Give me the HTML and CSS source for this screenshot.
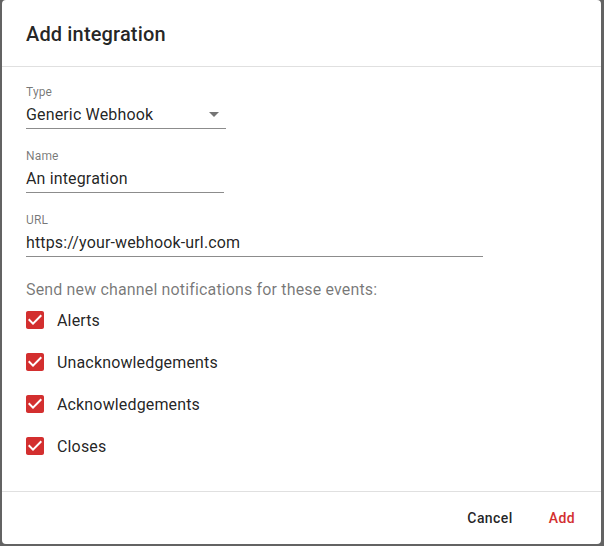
FILE: index.html
```html
<!DOCTYPE html>
<html>
<head>
<meta charset="utf-8">
<link rel="stylesheet" href="styles.css">
</head>
<body>
<div class="dialog">
  <div class="header"><h2 class="title">Add integration</h2></div>
  <div class="content">
    <div class="field w200">
      <div class="label">Type</div>
      <div class="input select">
        <span>Generic Webhook</span>
        <svg class="arrow" viewBox="0 0 24 24" width="24" height="24"><path d="M7 10l5 5 5-5z" fill="#757575"/></svg>
      </div>
    </div>
    <div class="field w198">
      <div class="label">Name</div>
      <div class="input"><span>An integration</span></div>
    </div>
    <div class="field w457">
      <div class="label">URL</div>
      <div class="input"><span>https://your-webhook-url.com</span></div>
    </div>
    <div class="legend">Send new channel notifications for these events:</div>
    <div class="checks">
      <label class="check"><svg viewBox="0 0 24 24" width="24" height="24"><path fill="#d32f2f" d="M19 3H5c-1.11 0-2 .9-2 2v14c0 1.1.89 2 2 2h14c1.11 0 2-.9 2-2V5c0-1.1-.89-2-2-2z"/><path fill="#fff" d="M10 17l-5-5 1.41-1.41L10 14.17l7.59-7.59L19 8l-9 9z"/></svg><span>Alerts</span></label>
      <label class="check"><svg viewBox="0 0 24 24" width="24" height="24"><path fill="#d32f2f" d="M19 3H5c-1.11 0-2 .9-2 2v14c0 1.1.89 2 2 2h14c1.11 0 2-.9 2-2V5c0-1.1-.89-2-2-2z"/><path fill="#fff" d="M10 17l-5-5 1.41-1.41L10 14.17l7.59-7.59L19 8l-9 9z"/></svg><span>Unacknowledgements</span></label>
      <label class="check"><svg viewBox="0 0 24 24" width="24" height="24"><path fill="#d32f2f" d="M19 3H5c-1.11 0-2 .9-2 2v14c0 1.1.89 2 2 2h14c1.11 0 2-.9 2-2V5c0-1.1-.89-2-2-2z"/><path fill="#fff" d="M10 17l-5-5 1.41-1.41L10 14.17l7.59-7.59L19 8l-9 9z"/></svg><span>Acknowledgements</span></label>
      <label class="check"><svg viewBox="0 0 24 24" width="24" height="24"><path fill="#d32f2f" d="M19 3H5c-1.11 0-2 .9-2 2v14c0 1.1.89 2 2 2h14c1.11 0 2-.9 2-2V5c0-1.1-.89-2-2-2z"/><path fill="#fff" d="M10 17l-5-5 1.41-1.41L10 14.17l7.59-7.59L19 8l-9 9z"/></svg><span>Closes</span></label>
    </div>
  </div>
  <div class="footer">
    <button class="btn">Cancel</button>
    <button class="btn primary">Add</button>
  </div>
</div>
</body>
</html>
```

FILE: styles.css
```css
html, body {
  margin: 0;
  padding: 0;
  background: #636363;
  font-family: Roboto, "Liberation Sans", sans-serif;
  color: rgba(0,0,0,0.87);
}
.dialog {
  margin-left: 2px;
  width: 599px;
  height: 544px;
  background: #fff;
  border-radius: 4px;
  display: flex;
  flex-direction: column;
  box-sizing: border-box;
}
.header {
  height: 67px;
  box-sizing: border-box;
  border-bottom: 1px solid #e0e0e0;
  padding: 20px 24px 0;
}
.title {
  margin: 0;
  font-size: 20px;
  font-weight: 500;
  line-height: 28px;
  letter-spacing: 0.0075em;
}
.content {
  flex: 1;
  padding: 18px 24px 0;
  display: flex;
  flex-direction: column;
}
.field {
  display: flex;
  flex-direction: column;
  margin-bottom: 20px;
}
.w200 { width: 200px; }
.w198 { width: 198px; }
.w457 { width: 457px; }
.label {
  font-size: 12px;
  line-height: 14px;
  color: rgba(0,0,0,0.54);
  letter-spacing: 0.15px;
}
.input {
  height: 29px;
  border-bottom: 1px solid #8c8c8c;
  display: flex;
  align-items: center;
  padding-top: 1px;
  box-sizing: border-box;
  height: 30px;
  font-size: 16px;
  line-height: 19px;
  letter-spacing: 0.15px;
  position: relative;
}
.select .arrow {
  position: absolute;
  right: 0;
  top: 3px;
}
.legend {
  margin-top: 3px;
  font-size: 16px;
  line-height: 19px;
  letter-spacing: 0.15px;
  color: rgba(0,0,0,0.54);
}
.checks {
  display: flex;
  flex-direction: column;
}
.check {
  height: 42px;
  display: flex;
  align-items: center;
  gap: 10px;
  margin-left: -3px;
  font-size: 16px;
  letter-spacing: 0.15px;
}
.check svg { display: block; }
.footer {
  height: 53px;
  box-sizing: border-box;
  border-top: 1px solid #e0e0e0;
  display: flex;
  justify-content: flex-end;
  align-items: center;
  gap: 8px;
  padding: 0 7px 0 8px;
}
.btn {
  min-width: 64px;
  height: 36px;
  padding: 6px 8px;
  border: none;
  background: transparent;
  font-family: Roboto, "Liberation Sans", sans-serif;
  font-size: 14px;
  font-weight: 500;
  letter-spacing: 0.02857em;
  color: rgba(0,0,0,0.87);
  border-radius: 4px;
}
.btn.primary { color: #d32f2f; }
```
